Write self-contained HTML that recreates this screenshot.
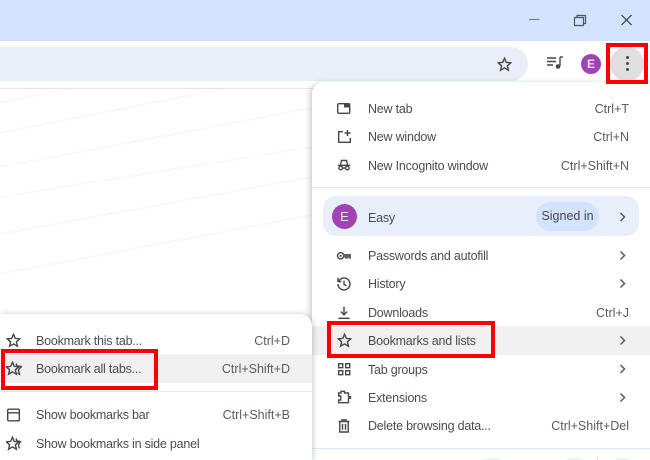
<!DOCTYPE html>
<html lang="en">
<head>
<meta charset="utf-8">
<title>Bookmarks menu</title>
<style>
html,body{margin:0;padding:0;width:650px;height:460px;overflow:hidden;background:#fff;}
#p{position:absolute;left:0;top:0;width:650px;height:460px;overflow:hidden;background:#fff;font-family:"Liberation Sans",sans-serif;font-size:12.5px;color:#4a4c51;}
#c{position:absolute;left:0;top:0;width:650px;height:460px;overflow:hidden;filter:blur(.3px);}
.a{position:absolute;}
.t{position:absolute;line-height:16px;white-space:nowrap;letter-spacing:-.22px;}
.r{position:absolute;line-height:16px;white-space:nowrap;text-align:right;color:#5a5c60;}
.red{position:absolute;border:4px solid #f00;box-sizing:border-box;}
svg{position:absolute;}
svg .s{fill:none;stroke:#444746;stroke-width:1.4;}
</style>
</head>
<body>
<div id="p">
<div id="c">
<div class="a" style="left:0;top:0;width:650px;height:41px;background:#d3e3fd"></div>
<div class="a" style="left:0;top:41px;width:650px;height:47px;background:#fff;border-bottom:1px solid #e4e4e4"></div>
<div class="a" style="left:0;top:47px;width:528px;height:34px;border-radius:0 17px 17px 0;background:#e9eef8"></div>

<!-- background faint lines -->
<svg style="left:0;top:89px" width="312" height="225" viewBox="0 0 312 225">
<g fill="none" stroke="#f9f9f9" stroke-width="2">
<path d="M0 14L67 0"/><path d="M0 44L223 0"/><path d="M0 78L312 19"/><path d="M0 108L312 58"/><path d="M0 145L312 88"/><path d="M0 185L312 126"/>
</g>
</svg>

<!-- window controls -->
<svg style="left:0;top:0" width="650" height="41" viewBox="0 0 650 41">
<path d="M529 19.500H539.500" stroke="#6f7780" stroke-width="1.100" fill="none"/>
<path d="M574.500 17.500H583.500V25.500H574.500Z M577 17V15.500H585.500V23.500H584" fill="none" stroke="#4f555c" stroke-width="1.200"/>
<path d="M621.500 15L631.500 25M631.500 15L621.500 25" stroke="#33363a" stroke-width="1.200" fill="none"/>
</svg>

<!-- toolbar icons -->
<svg style="left:497px;top:57px" width="15" height="15" viewBox="0 0 15 15"><path class="s" d="M7.500 1.300L9.300 5.400L13.800 5.800L10.400 8.800L11.400 13.200L7.500 10.900L3.600 13.200L4.600 8.800L1.200 5.800L5.700 5.400Z"/></svg>
<svg style="left:547px;top:55px" width="17" height="16" viewBox="0 0 17 16">
<path d="M0 3H9M0 6.500H9M0 10H6" stroke="#444746" stroke-width="1.500" fill="none"/>
<path d="M13 2V11" stroke="#444746" stroke-width="1.400" fill="none"/><path d="M13 2H16" stroke="#444746" stroke-width="1.400"/>
<circle cx="11" cy="11.500" r="2.300" fill="#444746"/>
</svg>
<div class="a" style="left:581px;top:54px;width:20px;height:20px;border-radius:50%;background:#a142b5;color:#eedcf3;font-size:12px;line-height:20px;text-align:center;font-weight:bold">E</div>
<div class="a" style="left:610px;top:47px;width:34px;height:34px;border-radius:50%;background:#dfdfdf"></div>
<div class="a" style="left:626px;top:56px;width:3px;height:3px;border-radius:50%;background:#46484a;box-shadow:0 6px 0 #46484a,0 12px 0 #46484a"></div>

<!-- main menu -->
<div class="a" style="left:312px;top:82px;width:338px;height:378px;border-radius:12px 0 0 0;background:#fff;box-shadow:-2px 1px 6px rgba(60,64,67,.28)"></div>

<svg style="left:336px;top:101px" width="16" height="16" viewBox="0 0 16 16"><rect class="s" x="1.700" y="2.700" width="12" height="9.600" rx="1"/><rect x="8" y="3" width="6" height="3.500" fill="#444746"/></svg>
<svg style="left:336px;top:129px" width="16" height="16" viewBox="0 0 16 16"><path class="s" d="M7 2.700H2.700V13.300H14.300V9"/><path d="M11.500 1V7M8.500 4H14.500" stroke="#444746" stroke-width="1.500"/></svg>
<svg style="left:336px;top:158px" width="16" height="16" viewBox="0 0 16 16"><path class="s" d="M4.500 6.500L5.500 2.500H10.500L11.500 6.500M1.800 7.300H14.200"/><circle class="s" cx="4.700" cy="10" r="1.800"/><circle class="s" cx="11.300" cy="10" r="1.800"/><path class="s" d="M6.500 10H9.500"/></svg>
<div class="t" style="left:368px;top:101px">New tab</div><div class="r" style="right:21px;top:101px">Ctrl+T</div>
<div class="t" style="left:368px;top:129px">New window</div><div class="r" style="right:21px;top:129px">Ctrl+N</div>
<div class="t" style="left:368px;top:158px">New Incognito window</div><div class="r" style="right:21px;top:158px">Ctrl+Shift+N</div>

<div class="a" style="left:312px;top:187px;width:338px;height:1px;background:#d9e6fb"></div>

<div class="a" style="left:323px;top:196px;width:316px;height:40px;border-radius:13px;background:#e8eefa"></div>
<div class="a" style="left:332px;top:204px;width:25px;height:25px;border-radius:50%;background:#a142b5;color:#f1e2f5;font-size:13px;line-height:25px;text-align:center">E</div>
<div class="t" style="left:368px;top:210px">Easy</div>
<div class="a" style="left:536px;top:202px;width:63px;height:29px;border-radius:15px;background:#d3e3fd;line-height:29px;text-align:center;color:#46484d">Signed in</div>

<svg style="left:336px;top:248px" width="16" height="16" viewBox="0 0 16 16"><circle class="s" cx="4.600" cy="7.800" r="3.100"/><circle cx="4.600" cy="7.800" r="1.100" fill="#444746"/><path d="M7.500 6H15V10.800H13.500L12.500 9.800L11.500 10.800H9.500L8.500 9.500H7.500Z" fill="#626463"/></svg>
<svg style="left:336px;top:276px" width="16" height="16" viewBox="0 0 16 16"><path class="s" d="M2 8A6 6 0 1 0 4 3.500L2.500 5"/><path d="M2 1.800V5.500H5.500" class="s"/><path class="s" d="M8 4.800V8.300L10.500 9.800"/></svg>
<svg style="left:336px;top:305px" width="16" height="16" viewBox="0 0 16 16"><path class="s" d="M8 1.500V9.500M4.800 6.500L8 9.800L11.200 6.500"/><path d="M2.500 13.300H13.500" stroke="#444746" stroke-width="1.500"/></svg>
<div class="t" style="left:368px;top:248px">Passwords and autofill</div>
<div class="t" style="left:368px;top:276px">History</div>
<div class="t" style="left:368px;top:305px">Downloads</div><div class="r" style="right:21px;top:305px">Ctrl+J</div>

<div class="a" style="left:312px;top:326px;width:338px;height:29px;background:#f0f0f0"></div>
<svg style="left:336.500px;top:333px" width="15" height="15" viewBox="0 0 15 15"><path class="s" d="M7.500 1.300L9.300 5.400L13.800 5.800L10.400 8.800L11.400 13.200L7.500 10.900L3.600 13.200L4.600 8.800L1.200 5.800L5.700 5.400Z"/></svg>
<div class="t" style="left:368px;top:333px">Bookmarks and lists</div>

<svg style="left:336px;top:361px" width="16" height="16" viewBox="0 0 16 16"><rect class="s" x="2.700" y="2.700" width="4" height="4"/><rect class="s" x="9.700" y="2.700" width="4" height="4"/><rect class="s" x="2.700" y="9.700" width="4" height="4"/><rect class="s" x="9.700" y="9.700" width="4" height="4"/></svg>
<svg style="left:336px;top:389px" width="16" height="16" viewBox="0 0 16 16"><path class="s" d="M2.700 4H5V2.300H8.500V4H12.500V7.700H14.500V9.300H12.500V13.700H2.700V11H4.700V7H2.700Z"/></svg>
<svg style="left:336px;top:417.500px" width="16" height="16" viewBox="0 0 16 16"><path class="s" d="M2.500 3.500H13.500M6 3.300V1.800H10V3.300M3.800 3.500V14H12.200V3.500M6.500 6V11.800M9.500 6V11.800"/></svg>
<div class="t" style="left:368px;top:362px">Tab groups</div>
<div class="t" style="left:368px;top:390px">Extensions</div>
<div class="t" style="left:368px;top:418px">Delete browsing data...</div><div class="r" style="right:21px;top:418px">Ctrl+Shift+Del</div>

<svg style="left:618px;top:210px" width="10" height="200" viewBox="0 0 10 200">
<g fill="none" stroke="#5a5a5a" stroke-width="1.500">
<path d="M2.500 3L6.500 7L2.500 11"/>
<path d="M2.500 41.500L6.500 45.500L2.500 49.500"/>
<path d="M2.500 69.500L6.500 73.500L2.500 77.500"/>
<path d="M2.500 126.500L6.500 130.500L2.500 134.500"/>
<path d="M2.500 155L6.500 159L2.500 163"/>
<path d="M2.500 183.500L6.500 187.500L2.500 191.500"/>
</g>
</svg>

<div class="a" style="left:312px;top:448px;width:338px;height:1px;background:#d9e6fb"></div>
<!-- tops of the next row's round buttons, cut by the frame -->
<svg style="left:312px;top:457px" width="338" height="3" viewBox="0 0 338 3">
<g fill="#f0f0f0">
<path d="M170 3Q180 1 190 1Q200 1 190 1Q200 1 190 1L190 1Q190 1 190 1Z"/>
<path d="M171 3C175 1.200 176 1 180 1S185 1.200 189 3Z"/>
<path d="M253 3C257 1.200 258 1 262 1S267 1.200 271 3Z"/>
<path d="M302 3C306 1.200 307 1 311 1S316 1.200 320 3Z"/>
</g>
<rect x="285" y="0" width="1" height="3" fill="#dddddd"/>
</svg>

<!-- submenu -->
<div class="a" style="left:0;top:314px;width:312px;height:146px;border-radius:0 12px 0 0;background:#fff;box-shadow:1px 0 6px rgba(60,64,67,.28)"></div>
<svg style="left:6px;top:333px" width="15" height="15" viewBox="0 0 15 15"><path class="s" d="M7.500 1.300L9.300 5.400L13.800 5.800L10.400 8.800L11.400 13.200L7.500 10.900L3.600 13.200L4.600 8.800L1.200 5.800L5.700 5.400Z"/></svg>
<div class="t" style="left:36px;top:333px">Bookmark this tab...</div><div class="r" style="left:150px;width:140px;top:333px">Ctrl+D</div>
<div class="a" style="left:0;top:354px;width:312px;height:29px;background:#f0f0f0"></div>
<svg style="left:6px;top:361px" width="16" height="15" viewBox="0 0 16 15"><path class="s" d="M6.500 1.300L8.300 5.400L12.800 5.800L9.400 8.800L10.400 13.200L6.500 10.900L2.600 13.200L3.600 8.800L.2 5.800L4.700 5.400Z"/><path class="s" d="M10 2.500L11 5L15.500 5.500L12.500 8.800L13.500 13.200L11.500 12"/></svg>
<div class="t" style="left:36px;top:361px">Bookmark all tabs...</div><div class="r" style="left:150px;width:140px;top:361px">Ctrl+Shift+D</div>
<div class="a" style="left:0;top:391px;width:312px;height:1px;background:#d9e6fb"></div>
<svg style="left:6px;top:407px" width="16" height="16" viewBox="0 0 16 16"><rect class="s" x="1.700" y="2.200" width="11.600" height="11.600" rx="1"/><path class="s" d="M2 5.800H13"/></svg>
<div class="t" style="left:36px;top:407px">Show bookmarks bar</div><div class="r" style="left:150px;width:140px;top:407px">Ctrl+Shift+B</div>
<svg style="left:6px;top:436px" width="16" height="15" viewBox="0 0 16 15"><path class="s" d="M6.500 1.300L8.300 5.400L12.800 5.800L9.400 8.800L10.400 13.200L6.500 10.900L2.600 13.200L3.600 8.800L.2 5.800L4.700 5.400Z"/><path class="s" d="M10 2.500L11 5L14.500 5.500L12.500 8.800L13.300 12.500"/></svg>
<div class="t" style="left:36px;top:436px">Show bookmarks in side panel</div>
</div>

<!-- red annotation boxes -->
<div class="red" style="left:606px;top:43px;width:42px;height:41px"></div>
<div class="red" style="left:327px;top:321px;width:168px;height:37px"></div>
<div class="red" style="left:1px;top:349px;width:157px;height:41px"></div>
</div>
</body>
</html>
